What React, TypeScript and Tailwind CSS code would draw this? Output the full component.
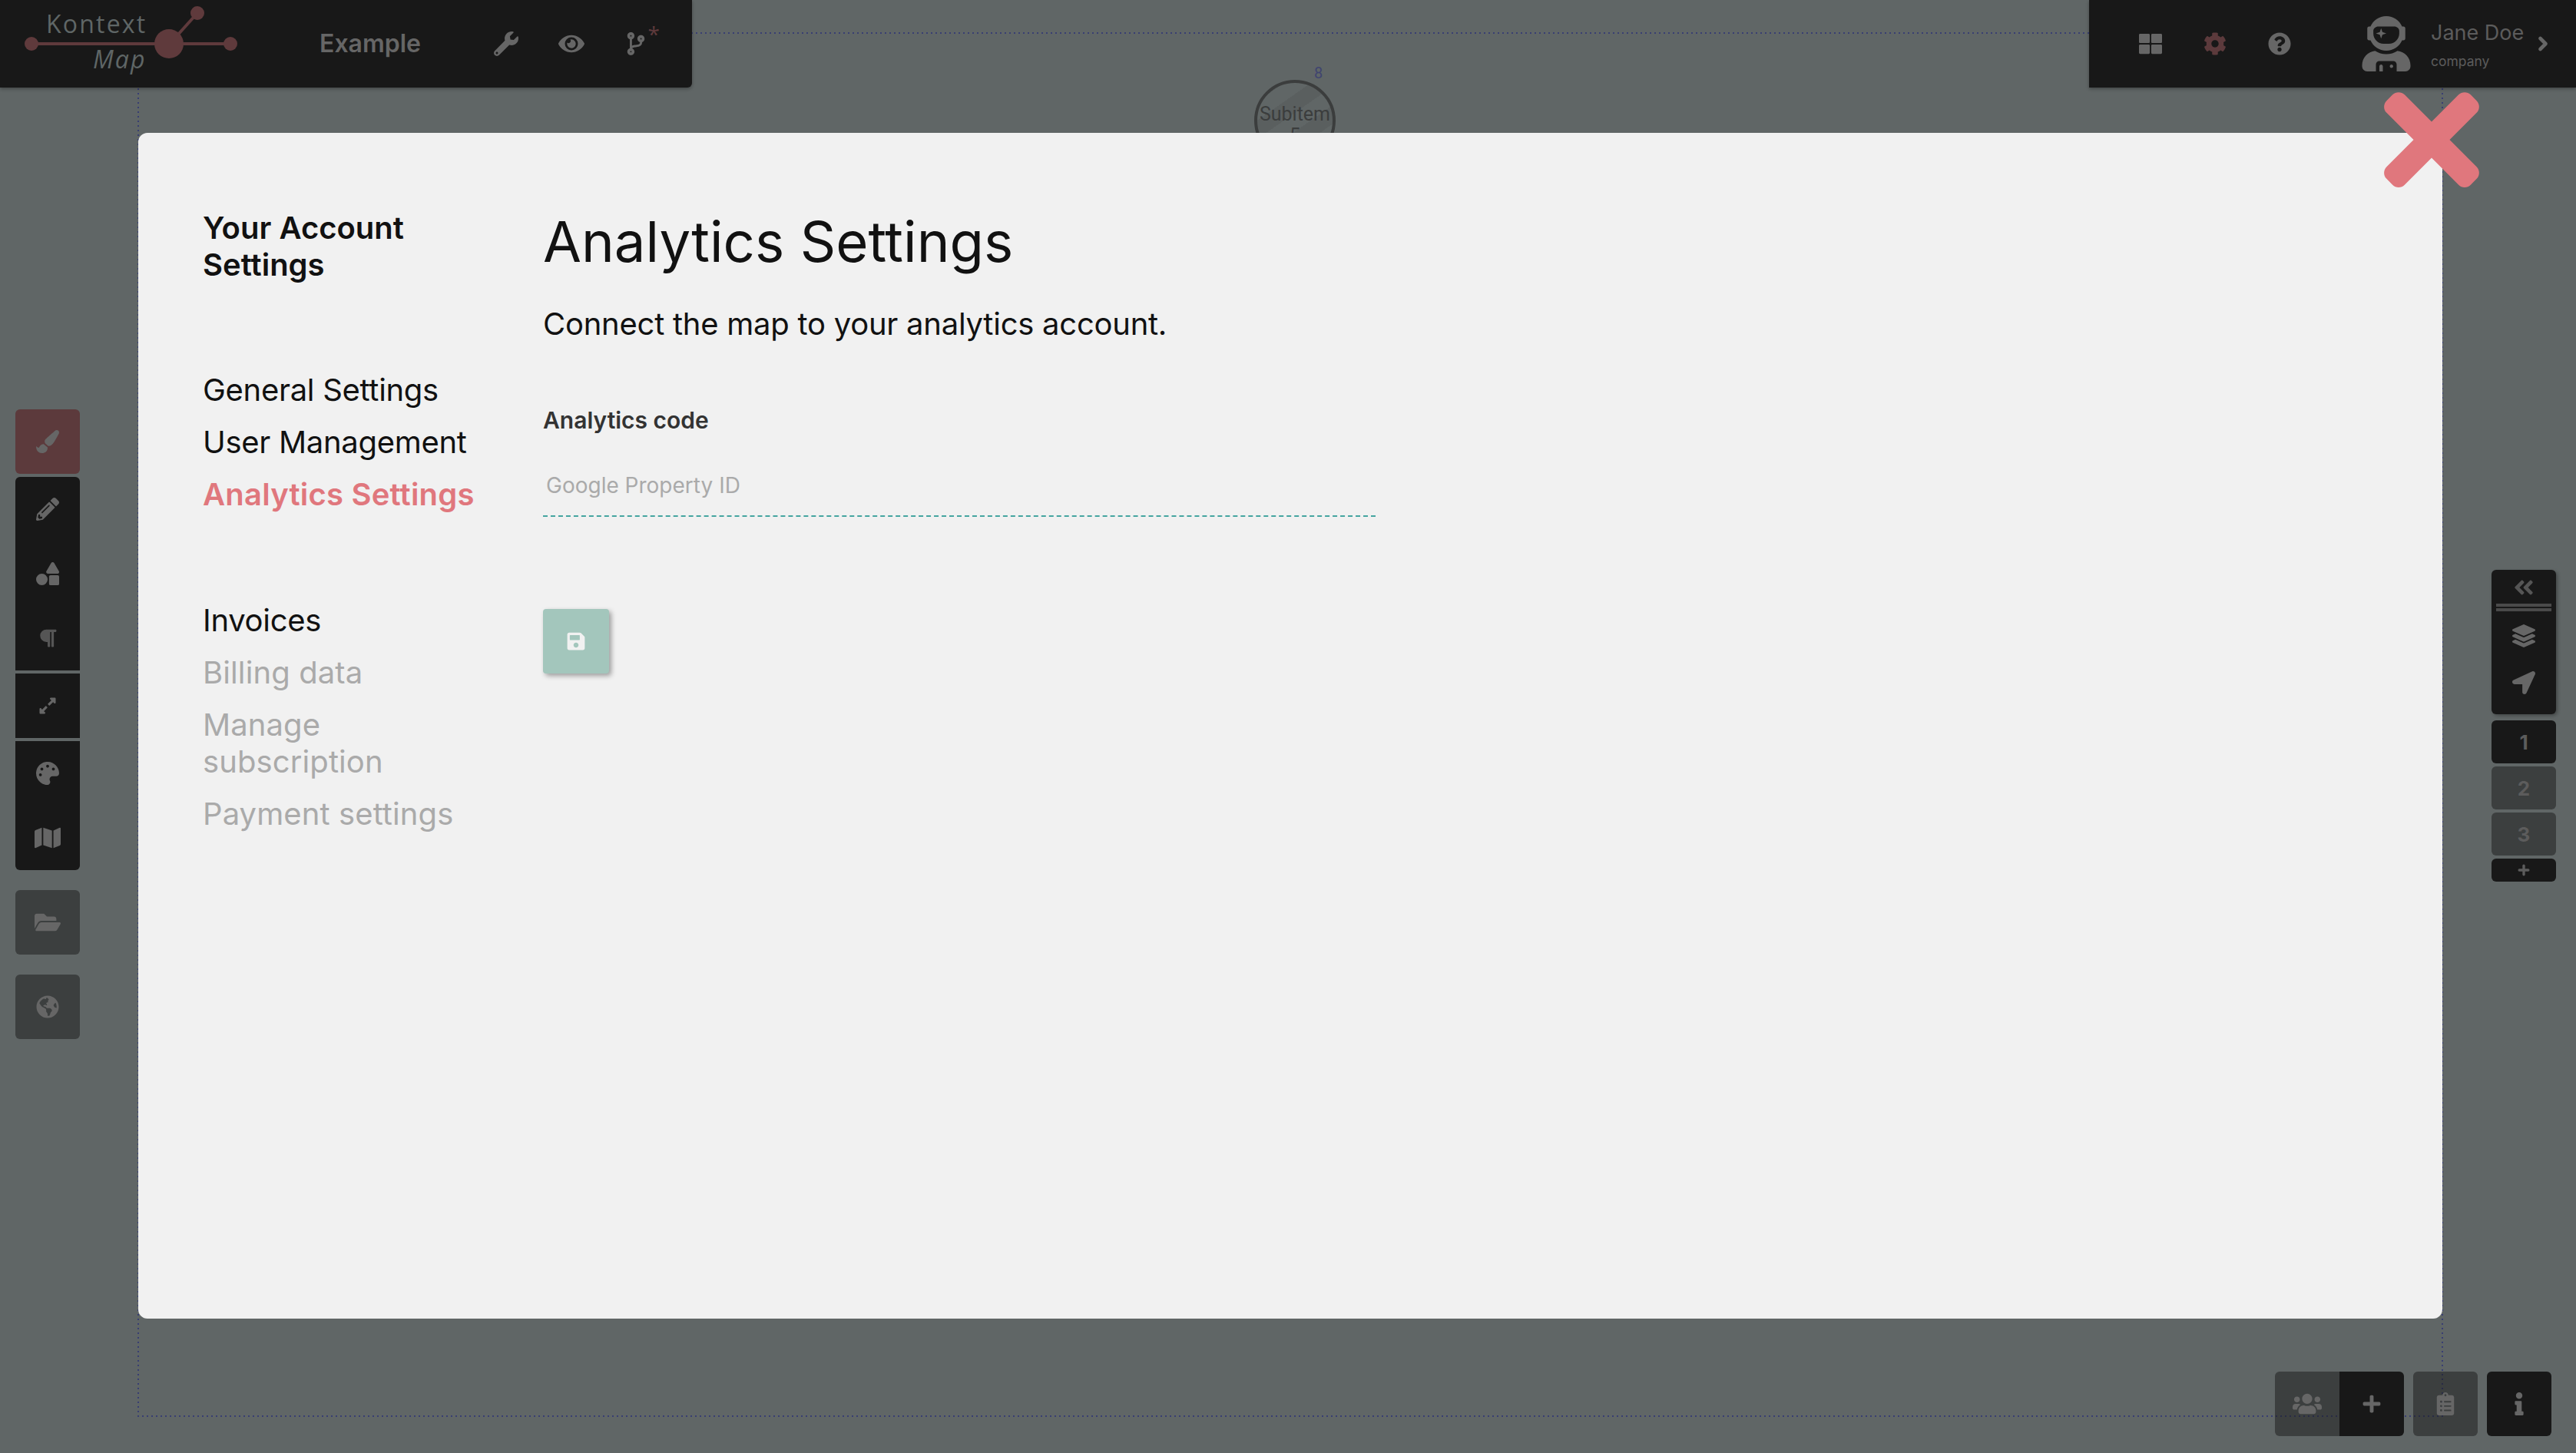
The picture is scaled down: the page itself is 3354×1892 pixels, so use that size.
import { ChevronRight, Plus } from "lucide-react"
import type { ReactNode } from "react"
import {
  FaAngleDoubleLeft,
  FaClipboardList,
  FaCodeBranch,
  FaCog,
  FaExpandAlt,
  FaEye,
  FaFolderOpen,
  FaGlobeAmericas,
  FaInfo,
  FaLayerGroup,
  FaLocationArrow,
  FaMap,
  FaPaintBrush,
  FaPalette,
  FaParagraph,
  FaPencilAlt,
  FaPlus,
  FaQuestionCircle,
  FaSave,
  FaShapes,
  FaThLarge,
  FaTimes,
  FaUserAstronaut,
  FaUsers,
  FaWrench,
} from "react-icons/fa"

type Tone = "dark" | "ghost" | "active"

const tones: Record<Tone, string> = {
  dark: "bg-[#181818]",
  // half see-through, the canvas border shows behind these
  ghost: "bg-[#181818]/50",
  active: "bg-[#5c3a3c]",
}

function Logo() {
  return (
    <div className="relative h-[114px] w-[320px]">
      <svg viewBox="0 0 320 114" className="absolute inset-0 h-full w-full">
        <path d="M41 57H300" stroke="#5f3a3c" strokeWidth="4" />
        <path d="M221 57L257 17" stroke="#5f3a3c" strokeWidth="4" />
        <circle cx="41" cy="57" r="9" fill="#5f3a3c" />
        <circle cx="300" cy="57" r="9" fill="#5f3a3c" />
        <circle cx="257" cy="17" r="9" fill="#5f3a3c" />
        <circle cx="220" cy="57" r="19" fill="#5f3a3c" />
      </svg>
      <span className="absolute left-[60px] top-[12px] font-['Open_Sans',sans-serif] text-[32px] font-medium leading-[38px] tracking-[2.2px] text-[#5f6666]">
        Kontext
      </span>
      <span className="absolute left-[121px] top-[58px] font-['Open_Sans',sans-serif] text-[32px] font-medium italic leading-[38px] tracking-[2px] text-[#5f6666]">
        Map
      </span>
    </div>
  )
}

function Tile({ tone = "dark", className = "", children }: { tone?: Tone; className?: string; children: ReactNode }) {
  return (
    <div className={`flex h-[84px] w-[84px] items-center justify-center text-[#666] ${tones[tone]} ${className}`}>
      {children}
    </div>
  )
}

function LeftToolbar() {
  return (
    <div className="flex w-[84px] flex-col">
      <Tile tone="active" className="rounded-md">
        <FaPaintBrush size={30} />
      </Tile>
      <div className="mt-1 flex h-[252px] flex-col rounded-t-md bg-[#181818] text-[#666]">
        <div className="flex h-[84px] items-center justify-center">
          <FaPencilAlt size={30} />
        </div>
        <div className="flex h-[84px] items-center justify-center">
          <FaShapes size={30} />
        </div>
        <div className="flex h-[84px] items-center justify-center text-[#555]">
          <FaParagraph size={26} />
        </div>
      </div>
      <Tile className="mt-1">
        <FaExpandAlt size={24} />
      </Tile>
      <div className="mt-1 flex h-[168px] flex-col rounded-b-md bg-[#181818] text-[#666]">
        <div className="flex h-[84px] items-center justify-center">
          <FaPalette size={30} />
        </div>
        <div className="flex h-[84px] items-center justify-center">
          <FaMap size={34} />
        </div>
      </div>
      <Tile tone="ghost" className="mt-[26px] rounded-md">
        <FaFolderOpen size={34} />
      </Tile>
      <Tile tone="ghost" className="mt-[26px] rounded-md">
        <FaGlobeAmericas size={30} />
      </Tile>
    </div>
  )
}

function RightToolbar() {
  return (
    <div className="flex w-[84px] flex-col gap-1 text-[#666]">
      <div className="mb-1 flex h-[188px] flex-col items-center rounded-md bg-[#181818] shadow-[2px_2px_4px_rgba(0,0,0,0.3)]">
        <FaAngleDoubleLeft size={30} className="mt-[8px] text-[#555]" />
        <div className="mt-[6px] h-[4px] w-[72px] bg-[#4a4a4a]" />
        <div className="mt-[2px] h-[4px] w-[72px] bg-[#4a4a4a]" />
        <FaLayerGroup size={30} className="mt-[17px]" />
        <FaLocationArrow size={30} className="mt-[31px]" />
      </div>
      <div className="flex h-[56px] items-center justify-center rounded-md bg-[#181818] text-[26px] font-bold text-[#5c5c5c]">1</div>
      <div className="flex h-[56px] items-center justify-center rounded-md bg-[#181818]/50 text-[26px] font-bold text-[#5c5c5c]">2</div>
      <div className="flex h-[56px] items-center justify-center rounded-md bg-[#181818]/50 text-[26px] font-bold text-[#5c5c5c]">3</div>
      <div className="flex h-[30px] items-center justify-center rounded-md bg-[#181818] text-[#5c5c5c]">
        <Plus size={20} strokeWidth={4} />
      </div>
    </div>
  )
}

function SideLink({ children, muted, active }: { children: ReactNode; muted?: boolean; active?: boolean }) {
  return (
    <div
      className={`text-[40px] leading-[48px] ${active ? "font-semibold tracking-[0.2px] text-[#e0777d]" : muted ? "tracking-[0.1px] text-[#aaaaaa]" : "tracking-[-0.3px] text-[#111]"}`}
    >
      {children}
    </div>
  )
}

export default function App() {
  return (
    <div className="relative h-[1892px] w-[3354px] overflow-hidden bg-[#606666] font-['Inter','Noto_Sans',sans-serif]">
      {/* canvas behind the modal */}
      <svg className="absolute inset-0 h-full w-full">
        <rect x="180" y="43" width="3000" height="1801" fill="none" stroke="#383e72" strokeWidth="2" strokeDasharray="2 4" />
      </svg>
      <div className="absolute left-[1633px] top-[104px] flex h-[106px] w-[106px] flex-col items-center rounded-full border-[4px] border-[#3b3d3d] bg-[repeating-linear-gradient(145deg,#5a5f5f_0,#5a5f5f_20px,#606666_20px,#606666_40px)] pt-[27px] font-['Roboto',sans-serif] text-[25px] leading-[28px] text-[#3b3d3d]">
        <span>Subitem</span>
        <span>5</span>
      </div>
      <span className="absolute left-[1711px] top-[83px] font-['Roboto',sans-serif] text-[20px] leading-[24px] text-[#3f4470]">8</span>

      {/* top bars */}
      <div className="absolute inset-x-0 top-0 flex justify-between">
        <div className="flex h-[114px] w-[901px] items-center rounded-br-md bg-[#181818] shadow-[0_2px_4px_rgba(0,0,0,0.3)]">
          <Logo />
          <span className="ml-[96px] text-[32px] font-semibold text-[#666]">Example</span>
          <div className="ml-[95px] flex items-center gap-[52px] text-[#666]">
            <FaWrench size={32} />
            <FaEye size={34} />
            <div className="relative">
              <FaCodeBranch size={30} />
              <span className="absolute -right-[16px] -top-[14px] font-['Open_Sans',sans-serif] text-[28px] leading-[32px] text-[#5f3a3c]">*</span>
            </div>
          </div>
        </div>
        <div className="flex h-[114px] w-[634px] items-center bg-[#181818] pl-[65px] text-[#666] shadow-[0_2px_4px_rgba(0,0,0,0.3)]">
          <FaThLarge size={30} />
          <FaCog size={30} className="ml-[54px] text-[#5c3a3c]" />
          <FaQuestionCircle size={30} className="ml-[54px]" />
          <FaUserAstronaut size={72} className="ml-[88px]" />
          <div className="ml-[22px] flex w-[124px] flex-col whitespace-nowrap pt-[2px]">
            <span className="text-[27px] leading-[34px] text-[#5c5c5c]">Jane Doe</span>
            <span className="mt-[9px] text-[17.5px] leading-[22px] text-[#5c5c5c]">company</span>
          </div>
          <ChevronRight size={28} strokeWidth={4} className="ml-[8px]" />
        </div>
      </div>

      {/* side toolbars */}
      <div className="absolute left-[20px] top-[533px]">
        <LeftToolbar />
      </div>
      <div className="absolute right-[26px] top-[742px]">
        <RightToolbar />
      </div>

      {/* bottom actions */}
      <div className="absolute bottom-[22px] left-[2962px] flex text-[#666]">
        <Tile tone="ghost" className="rounded-l-md">
          <FaUsers size={38} />
        </Tile>
        <Tile className="rounded-r-md">
          <FaPlus size={26} />
        </Tile>
        <Tile tone="ghost" className="ml-3 rounded-md">
          <FaClipboardList size={30} />
        </Tile>
        <Tile className="ml-3 rounded-md">
          <FaInfo size={30} />
        </Tile>
      </div>

      {/* modal */}
      <div className="absolute left-[180px] top-[173px] flex h-[1544px] w-[3000px] rounded-xl bg-[#f1f1f1] pl-[84px] pt-[100px]">
        <div className="w-[443px]">
          <div className="text-[40px] font-semibold leading-[48px] text-[#111]">
            Your Account
            <br />
            Settings
          </div>
          <div className="mt-[115px] flex flex-col gap-[20px]">
            <SideLink>General Settings</SideLink>
            <SideLink>User Management</SideLink>
            <SideLink active>Analytics Settings</SideLink>
          </div>
          <div className="mt-[116px] flex flex-col gap-[20px]">
            <SideLink>Invoices</SideLink>
            <SideLink muted>Billing data</SideLink>
            <SideLink muted>
              Manage
              <br />
              subscription
            </SideLink>
            <SideLink muted>Payment settings</SideLink>
          </div>
        </div>
        <div className="flex flex-col items-start">
          <h1 className="-mt-[3px] text-[72.5px] font-normal leading-[90px] text-[#111]">Analytics Settings</h1>
          <p className="mt-[38px] text-[40px] leading-[48px] tracking-[-0.25px] text-[#111]">Connect the map to your analytics account.</p>
          <label className="mt-[83px] text-[30px] font-semibold leading-[36px] text-[#333]">Analytics code</label>
          <div className="mt-[49px] flex h-[59px] w-[1084px] items-start border-b-2 border-dashed border-[#45a5a0] pl-1 text-[28px] leading-[36px] text-[#aaaaaa]">
            Google Property ID
          </div>
          <button className="mt-[120px] flex h-[84px] w-[86px] items-center justify-center rounded bg-[#a3c6bc] text-[#f1f1f1] shadow-[3px_3px_6px_rgba(0,0,0,0.35)]">
            <FaSave size={26} />
          </button>
        </div>
      </div>

      {/* close */}
      <FaTimes size={180} className="absolute left-[3076px] top-[92px] text-[#e0777d]" />
    </div>
  )
}
